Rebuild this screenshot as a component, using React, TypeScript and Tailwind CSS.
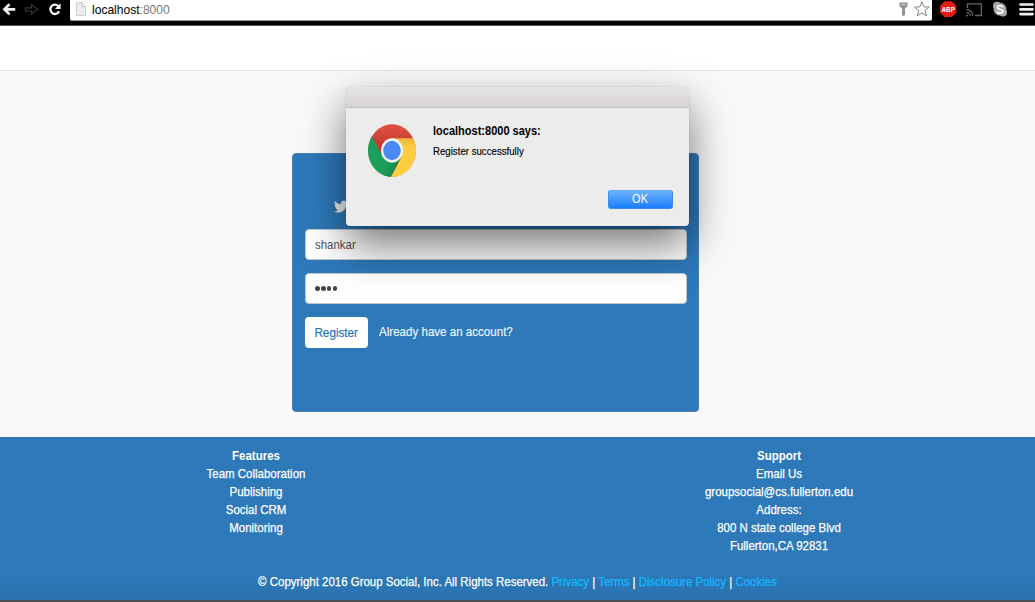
import type { ReactNode } from "react";
import { FaTwitter } from "react-icons/fa";

function Center({ children, className = "" }: { children: ReactNode; className?: string }) {
  return <div className={`h-[18px] origin-center scale-x-[0.882] whitespace-nowrap ${className}`}>{children}</div>;
}

function BrowserBar() {
  return (
    <div className="flex h-[26px] shrink-0 items-start border-b border-[#555] bg-black">
      <svg className="h-[25px] w-[70px] shrink-0" viewBox="0 0 70 25" fill="none">
        <path d="M9.5 4.2 4.5 9.3l5 5.1M5 9.3h10.2" stroke="#f2f2f2" strokeWidth="2.7" />
        <path d="M25.5 7.8h6V4.6l6 4.7-6 4.7v-3h-6z" stroke="#3a3a3a" strokeWidth="1.2" />
        <path d="M58.3 6.2A4.5 4.7 0 1 0 59 11.2" stroke="#f2f2f2" strokeWidth="2.3" />
        <path d="M60.6 3.3v5.8h-5.8z" fill="#f2f2f2" />
      </svg>
      <div className="flex h-[21px] w-[862px] items-start rounded-b-[2px] border-b border-[#999] bg-white">
        <svg className="ml-[6px] mt-[2px] h-[14px] w-[10px]" viewBox="0 0 10 14">
          <path d="M.5.5h5.7l3.3 3.6v9.4h-9z" fill="#ededed" stroke="#cfcfcf" />
          <path d="M6 .5v4h3.5" fill="#fff" stroke="#b5b5b5" />
        </svg>
        <div className="ml-[6px] mt-[1px] origin-left scale-x-[0.927] whitespace-nowrap text-[13px] leading-[18px] text-[#777]">
          <span className="text-[#111] [-webkit-text-stroke:0.1px]">localhost</span>:8000
        </div>
        <svg className="ml-auto h-[20px] w-[36px]" viewBox="0 0 36 20">
          <path d="M3.5 2.5h8v4L9 8.3v6.5l-1.5 1.4L6 14.8V8.3L3.5 6.5z" fill="#929292" />
          <path d="M5.5 4.5h4" stroke="#ddd" />
          <path d="m25.9 1.8 2 5 5.3.3-4.1 3.4 1.4 5.4-4.6-3-4.6 3 1.4-5.4-4.1-3.4 5.3-.3z" fill="#fff" stroke="#777" strokeWidth=".9" />
        </svg>
      </div>
      <svg className="h-[25px] w-[103px] shrink-0" viewBox="0 0 103 25">
        <path d="M12.6 1.2h7.2l4.5 4.5v6.8l-4.5 4.6h-7.2l-4.5-4.6V5.7z" fill="#e31c16" />
        <text x="16.2" y="11.9" textAnchor="middle" textLength="13.5" lengthAdjust="spacingAndGlyphs" fontSize="7.8" fontWeight="700" fill="#fff">ABP</text>
        <g fill="none" stroke="#666" strokeWidth="1.3">
          <path d="M35.5 8V3.8h13.8v11.7h-6.5M34.5 12.3a3.7 3.7 0 0 1 3.7 3.7M34.5 9.7a6.3 6.3 0 0 1 6.3 6.3" />
        </g>
        <circle cx="35" cy="15.4" r="1" fill="#666" />
        <circle cx="68" cy="9.2" r="6.4" fill="#a7a7a7" />
        <circle cx="65" cy="5.8" r="4" fill="#a7a7a7" />
        <circle cx="71" cy="12.6" r="4" fill="#a7a7a7" />
        <text x="68" y="13.5" textAnchor="middle" fontSize="12" fontWeight="700" fill="#fff">S</text>
        <path d="M88.5 4.5h12M88.5 9.3h12M88.5 14.1h12" stroke="#eee" strokeWidth="2.7" strokeLinecap="round" />
      </svg>
    </div>
  );
}

function ChromeLogo() {
  return (
    <svg className="mt-[16px] h-[53px] w-[48px] shrink-0" viewBox="0 0 48 48" preserveAspectRatio="none">
      <defs>
        <linearGradient id="redShade" x1="0" y1="0" x2="0" y2="1">
          <stop offset="0.12" stopColor="#db4b3f" />
          <stop offset="0.4" stopColor="#c4392e" />
        </linearGradient>
        <linearGradient id="greenShade" x1="0" y1="0.3" x2="1" y2="0.8">
          <stop offset="0.55" stopColor="#1ba05b" />
          <stop offset="1" stopColor="#138048" />
        </linearGradient>
        <linearGradient id="yellowShade" x1="0" y1="0" x2="0" y2="1">
          <stop offset="0" stopColor="#e9b93a" />
          <stop offset="0.22" stopColor="#ffcd40" />
        </linearGradient>
      </defs>
      <circle cx="24" cy="24" r="23.8" fill="url(#redShade)" />
      <path d="M24 13H45.3A24 24 0 0 1 22.88 47.95L33.53 29.5Z" fill="url(#yellowShade)" />
      <path d="M33.53 29.5 22.88 47.95A24 24 0 0 1 3.82 11.05L14.47 29.5Z" fill="url(#greenShade)" />
      <circle cx="24" cy="24" r="11" fill="#f4f4f4" />
      <circle cx="24" cy="24" r="8.8" fill="#4a8af4" />
    </svg>
  );
}

function AlertDialog() {
  return (
    <div className="absolute left-[346px] top-[87px] flex h-[139px] w-[343px] flex-col rounded-[4px] bg-[#ececec] shadow-[0_0_1px_rgba(0,0,0,0.4),0_19px_44px_rgba(0,0,0,0.54)]">
      <div className="h-[21px] shrink-0 rounded-t-[4px] border-b border-[#c4c1c4] bg-linear-to-b from-[#e8e5e8] to-[#d5d1d5]" />
      <div className="flex pl-[22px]">
        <ChromeLogo />
        <div className="ml-[17px] pt-[14px] text-black">
          <div className="h-[18px] origin-left scale-x-[0.918] whitespace-nowrap text-[12px] font-bold leading-[18px]">localhost:8000 says:</div>
          <div className="mt-[3px] h-[16px] origin-left scale-x-[0.92] whitespace-nowrap text-[10.5px] leading-[16px] [-webkit-text-stroke:0.15px]">Register successfully</div>
        </div>
      </div>
      <button className="mb-[17px] mr-[16px] mt-auto h-[19px] w-[65px] self-end rounded-[3px] border border-[#3a8cf0] border-t-[#62a9f8] bg-linear-to-b from-[#6bb2fb] to-[#157cfb] text-[12.5px] leading-[17px] text-white">
        <span className="inline-block scale-x-[0.88]">OK</span>
      </button>
    </div>
  );
}

function RegisterCard() {
  return (
    <main className="ml-[292px] mt-[82px] flex h-[259px] w-[407px] flex-col rounded-[4px] border border-[#4581b2] bg-[#2d79ba] px-[12px] pt-[45px]">
      <FaTwitter className="ml-[29px] h-[15px] w-[14px] text-[#eee]" preserveAspectRatio="none" />
      <div className="mt-[15px] h-[31px] w-[382px] rounded-[4px] border border-[#bfc8ce] bg-white px-[9px] text-[13px] leading-[29px] text-[#555]">
        <span className="inline-block origin-left scale-x-[0.88]">shankar</span>
      </div>
      <div className="mt-[13px] flex h-[31px] w-[382px] items-center gap-[1.2px] rounded-[4px] border border-[#bfc8ce] bg-white px-[9px]">
        {[0, 1, 2, 3].map((i) => (
          <span key={i} className="h-[5px] w-[4.7px] rounded-full bg-[#444]" />
        ))}
      </div>
      <div className="mt-[13px] flex items-center">
        <button className="h-[31px] w-[63px] rounded-[4px] bg-white text-[13px] text-[#1f6fc0]">
          <span className="inline-block scale-x-[0.9] [-webkit-text-stroke:0.15px]">Register</span>
        </button>
        <span className="-mt-[2px] ml-[11px] origin-left scale-x-[0.89] whitespace-nowrap text-[13px] leading-[18px] text-[#f1f7fc] [-webkit-text-stroke:0.15px]">
          Already have an account?
        </span>
      </div>
    </main>
  );
}

function Footer() {
  return (
    <footer className="mt-auto flex h-[165px] shrink-0 flex-col border-b-2 border-[#4b4e52] bg-linear-to-b from-[#2d79ba] from-82% to-[#2b71ae] pt-[10px] text-center text-[13px] leading-[18px] text-white [-webkit-text-stroke:0.25px]">
      <div className="flex h-[108px]">
        <div className="w-[512px]">
          <Center className="font-bold [-webkit-text-stroke:0px]">Features</Center>
          <Center>Team Collaboration</Center>
          <Center>Publishing</Center>
          <Center>Social CRM</Center>
          <Center>Monitoring</Center>
        </div>
        <div className="ml-[11px] w-[512px]">
          <Center className="font-bold [-webkit-text-stroke:0px]">Support</Center>
          <Center>Email Us</Center>
          <Center>groupsocial@cs.fullerton.edu</Center>
          <Center>Address:</Center>
          <Center>800 N state college Blvd</Center>
          <Center>Fullerton,CA 92831</Center>
        </div>
      </div>
      <Center className="mt-[18px]">
        © Copyright 2016 Group Social, Inc. All Rights Reserved. <a className="text-[#12b9ff]">Privacy</a> | <a className="text-[#12b9ff]">Terms</a> |{" "}
        <a className="text-[#12b9ff]">Disclosure Policy</a> | <a className="text-[#12b9ff]">Cookies</a>
      </Center>
    </footer>
  );
}

export default function App() {
  return (
    <div className="relative flex h-[602px] w-[1035px] flex-col overflow-hidden bg-[#f9f9f9] font-['Liberation_Sans',Arial,sans-serif]">
      <BrowserBar />
      <header className="h-[45px] shrink-0 border-b border-[#e4e4e4] bg-white" />
      <RegisterCard />
      <Footer />
      <AlertDialog />
    </div>
  );
}
